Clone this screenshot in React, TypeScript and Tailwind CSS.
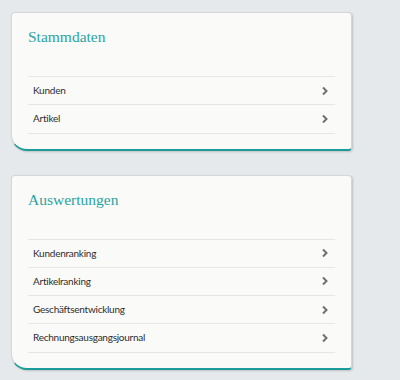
import React from "react";

const Chevron = () => (
  <svg width="8" height="10" viewBox="0 0 8 10" className="shrink-0">
    <path d="M2 1.5 L5.5 5 L2 8.5" fill="none" stroke="#707070" strokeWidth="2" />
  </svg>
);

function Card({ title, items }: { title: string; items: string[] }) {
  return (
    <div className="w-[341px] bg-[#fafaf8] border border-[#d4d6d8] border-b-2 border-b-[#1b9c98] rounded-[4px] rounded-bl-[16px] shadow-[1px_1px_2px_rgba(0,0,0,0.18)] px-4 pt-[13px] pb-[15px]">
      <div
        className="text-[15.5px] leading-[22px] text-[#2aa3a3] h-[50px]"
        style={{ fontFamily: '"Liberation Serif", serif' }}
      >
        {title}
      </div>
      <div className="border-t border-[#e6e6e4]">
        {items.map((it) => (
          <div
            key={it}
            className="h-[28.25px] border-b border-[#e6e6e4] flex items-center justify-between pl-[5px] pr-[6px]"
          >
            <span
              className="text-[10px] tracking-[-0.25px] text-[#2d2d2d]"
              style={{ fontFamily: 'Lato, sans-serif' }}
            >
              {it}
            </span>
            <Chevron />
          </div>
        ))}
      </div>
    </div>
  );
}

export default function App() {
  return (
    <div className="w-[400px] h-[380px] bg-[#e6e9ec] pl-[11px] pt-[12px] flex flex-col gap-[24px] overflow-hidden">
      <Card title="Stammdaten" items={["Kunden", "Artikel"]} />
      <Card
        title="Auswertungen"
        items={["Kundenranking", "Artikelranking", "Geschäftsentwicklung", "Rechnungsausgangsjournal"]}
      />
    </div>
  );
}
